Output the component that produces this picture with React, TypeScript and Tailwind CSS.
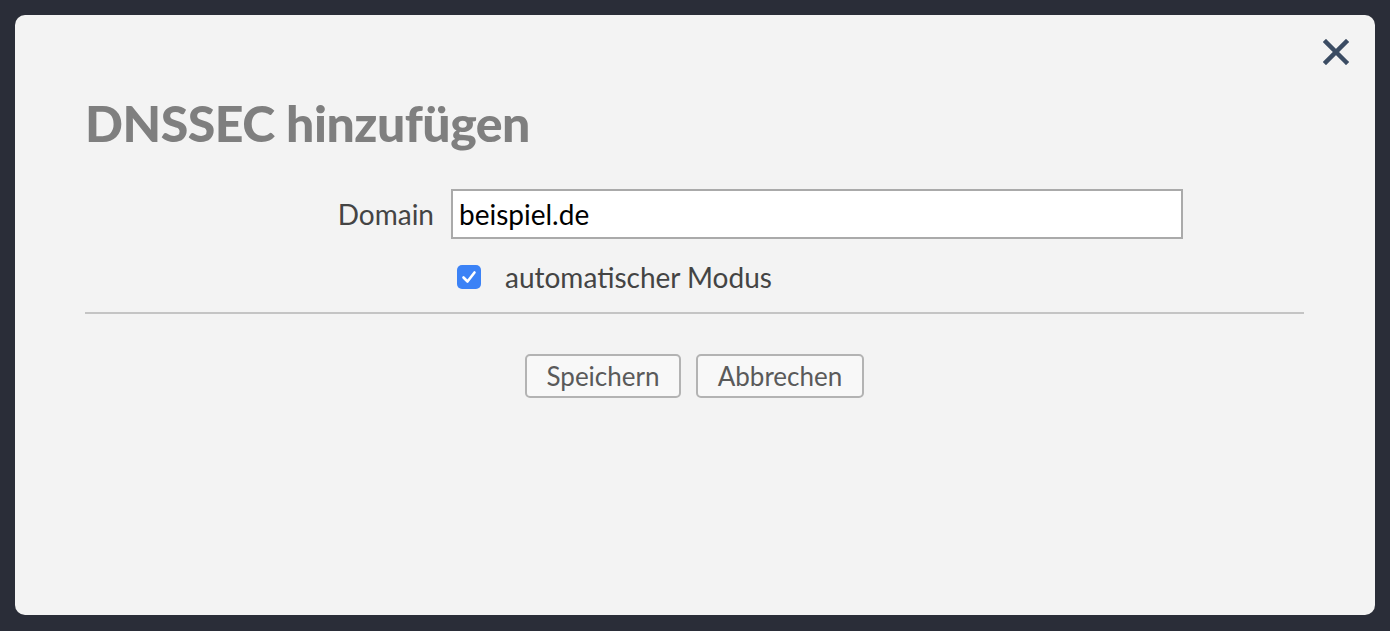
import React from "react";

export default function App() {
  return (
    <div className="w-[1390px] h-[631px] bg-[#2a2d38] p-[15px] box-border" style={{ fontFamily: "Lato, 'Noto Sans', sans-serif" }}>
      <div className="relative w-[1360px] h-[600px] bg-[#f3f3f3] rounded-[10px] px-[70px] pt-[88px] box-border">
        <button className="absolute left-[1308px] top-[24px] w-[26px] h-[26px] flex items-center justify-center text-[#3b4c63]">
          <svg width="26" height="26" viewBox="0 0 26 26">
            <path d="M3 3 L23 23 M23 3 L3 23" stroke="#3b4c63" strokeWidth="4.5" strokeLinecap="square" />
          </svg>
        </button>
        <h1 className="text-[50px] leading-[40px] font-black text-[#7f7f7f] tracking-[-0.5px] m-0">DNSSEC hinzufügen</h1>
        <div className="mt-[46px] flex items-center">
          <label className="w-[366px] pr-[17px] text-right text-[28px] leading-[34px] text-[#444] box-border">Domain</label>
          <input
            defaultValue="beispiel.de"
            className="w-[732px] h-[50px] border-2 border-[#aaaaaa] bg-white px-[6px] text-[28px] text-black outline-none box-border"
          />
        </div>
        <div className="mt-[26px] h-[24px] flex items-center pl-[372px]">
          <span className="w-[24px] h-[24px] rounded-[5px] bg-[#3b82f6] flex items-center justify-center">
            <svg width="18" height="18" viewBox="0 0 18 18">
              <path d="M3.5 9.5 L7.5 13.5 L14.5 4.5" stroke="white" strokeWidth="2.6" fill="none" strokeLinecap="round" strokeLinejoin="round" />
            </svg>
          </span>
          <span className="ml-[24px] text-[28px] leading-[34px] text-[#444]">automatischer Modus</span>
        </div>
        <div className="mt-[23px] h-[2px] bg-[#c4c4c4] w-[1219px]" />
        <div className="mt-[40px] flex justify-center gap-[15px] pr-[1px]">
          <button className="w-[156px] h-[44px] border-2 border-[#b3b3b3] rounded-[5px] bg-[#f8f8f8] text-[26px] leading-[32px] text-[#5a5a5a]">Speichern</button>
          <button className="w-[168px] h-[44px] border-2 border-[#b3b3b3] rounded-[5px] bg-[#f8f8f8] text-[26px] leading-[32px] text-[#5a5a5a]">Abbrechen</button>
        </div>
      </div>
    </div>
  );
}
